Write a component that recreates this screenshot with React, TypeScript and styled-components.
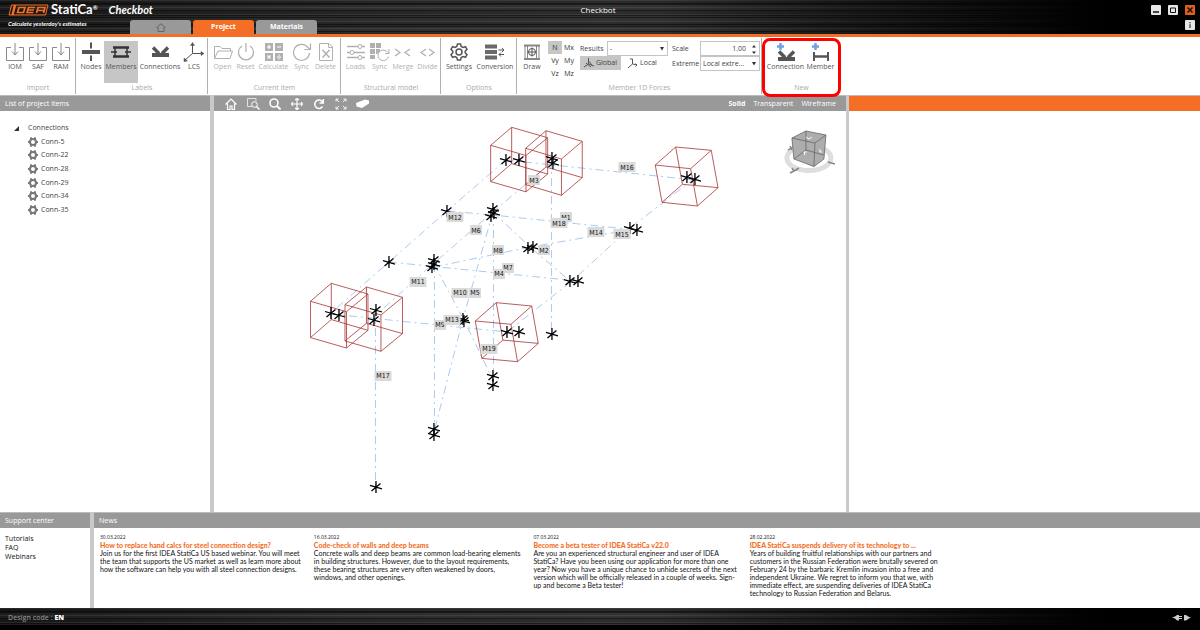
import React from "react";
import styled, { createGlobalStyle, css } from "styled-components";

const Global = createGlobalStyle`
  * { box-sizing: border-box; }
  html, body { margin: 0; padding: 0; }
  body { background: #fff; font-family: "Open Sans", "Noto Sans", sans-serif; font-size: 7px; line-height: 10px; color: #444; }
  button, input, select { font: inherit; color: inherit; margin: 0; padding: 0; border: 0; background: none; }
  button { cursor: pointer; }
  a { color: inherit; text-decoration: none; }
  svg { display: block; flex: none; }
  h1, h2, h3, p, ul { margin: 0; padding: 0; font-size: inherit; font-weight: inherit; }
`;

const ORANGE = "#f46f25";
const BAR = "#999";

const brushed = css`
  background:
    linear-gradient(90deg, rgba(0,0,0,0) 55%, #000 92%),
    repeating-linear-gradient(180deg, rgba(255,255,255,0.08) 0 1px, transparent 1px 3px, rgba(0,0,0,0.5) 3px 4px, transparent 4px 7px),
    repeating-linear-gradient(180deg, transparent 0 4px, rgba(0,0,0,0.35) 4px 5px, rgba(255,255,255,0.03) 5px 11px),
    linear-gradient(90deg, #161616, #262626 30%, #2c2c2c 50%, #202020);
`;

const Page = styled.div`
  display: flex;
  flex-direction: column;
  min-height: 100vh;
`;

const Header = styled.header`
  ${brushed}
  display: grid;
  grid-template-columns: 1fr auto 1fr;
  height: 37px;
  border-bottom: 3px solid ${ORANGE};
  background-clip: padding-box;
  color: #fff;
`;

const BrandStack = styled.div`
  display: grid;
  grid-template-columns: 130px auto;
  grid-template-rows: 20px 14px;
`;

const BrandLogo = styled.div`
  grid-column: 1 / 3;
  display: flex;
  align-items: center;
  gap: 2px;
  height: 19px;
  padding-left: 8px;
  font-family: Lato, sans-serif;
  font-size: 13px;
  line-height: 13px;
  font-weight: 700;
  white-space: nowrap;
`;

const Reg = styled.sup`
  font-size: 6px;
  line-height: 6px;
  vertical-align: 4px;
`;

const AppName = styled.span`
  padding-left: 9px;
  font-size: 11px;
  font-style: italic;
`;

const Tagline = styled.p`
  padding-left: 8px;
  font-family: Lato, sans-serif;
  font-size: 6px;
  line-height: 8px;
  font-style: italic;
  font-weight: 700;
  white-space: nowrap;
`;

const TabRow = styled.nav`
  display: flex;
  gap: 2px;
`;

const Tab = styled.button<{ $active?: boolean }>`
  display: flex;
  align-items: center;
  justify-content: center;
  width: 61px;
  height: 14px;
  border-radius: 3px 3px 0 0;
  background: ${(p) => (p.$active ? ORANGE : BAR)};
  color: #fff;
  font-weight: 700;
`;

const Title = styled.h1`
  padding: 5px 4px 0 0;
  font-size: 8px;
  line-height: 10px;
`;

const WindowControls = styled.div`
  display: grid;
  grid-template-columns: repeat(3, 10px);
  grid-template-rows: 10px 10px;
  gap: 5px 7px;
  justify-content: end;
  padding: 5px 5px 0 0;
`;

const WinButton = styled.button<{ $close?: boolean; $last?: boolean }>`
  display: grid;
  place-items: center;
  border-radius: 1px;
  background: ${(p) => (p.$close ? "#e0601c" : "#e6e6e6")};
  color: #111;
  ${(p) => p.$last && "grid-column: 3;"}
`;

const Ribbon = styled.section`
  display: flex;
  height: 58px;
  background: #fff;
`;

const Group = styled.section<{ $w: number }>`
  display: flex;
  flex-direction: column;
  justify-content: space-between;
  width: ${(p) => p.$w}px;
  height: 58px;
  padding: 4px 0 2px;
  position: relative;
  &::after {
    content: "";
    position: absolute;
    right: 0;
    top: 1px;
    bottom: 1px;
    width: 1px;
    background: #b0b0b0;
  }
`;

const NewGroup = styled(Group)`
  height: 59px;
  margin-top: 1px;
  padding: 0 0 1px;
  border: 3px solid #f00;
  border-radius: 8px;
  z-index: 1;
  &::after { display: none; }
`;

const Tools = styled.div`
  display: flex;
  justify-content: center;
`;

const GroupLabel = styled.h2`
  color: #aaa;
  text-align: center;
`;

const Tool = styled.button<{ $w: number; $on?: boolean; $dim?: boolean }>`
  display: flex;
  flex-direction: column;
  align-items: center;
  width: ${(p) => p.$w}px;
  height: ${(p) => (p.$on ? 42 : 32)}px;
  background: ${(p) => (p.$on ? "#c6c6c6" : "none")};
  color: ${(p) => (p.$dim ? "#b0b0b0" : "#555")};
  white-space: nowrap;
  svg { height: 21px; }
`;

const Forces = styled.div`
  display: grid;
  grid-template-columns: 24px 28px 88px 1fr;
  column-gap: 4px;
  padding: 0 2px 0 3px;
`;

const ForceGrid = styled.div`
  display: grid;
  grid-template-columns: 14px 14px;
  grid-auto-rows: 13px;
`;

const ForceButton = styled.button<{ $on?: boolean }>`
  background: ${(p) => (p.$on ? "#c6c6c6" : "none")};
  color: #333;
`;

const Fields = styled.div`
  display: flex;
  flex-direction: column;
`;

const Field = styled.label<{ $label: number }>`
  display: grid;
  grid-template-columns: ${(p) => p.$label}px 1fr;
  align-items: center;
  height: 15px;
`;

const Box = styled.span`
  position: relative;
  display: block;
  height: 15px;
  border: 1px solid #c4c4c4;
  svg { position: absolute; right: 2px; top: 3px; pointer-events: none; }
`;

const Select = styled.select`
  appearance: none;
  display: block;
  width: 100%;
  height: 13px;
  padding-left: 2px;
`;

const NumberBox = styled.input`
  display: block;
  width: 100%;
  height: 13px;
  padding-right: 13px;
  text-align: right;
`;

const Axes = styled.div`
  display: flex;
  gap: 3px;
`;

const AxisButton = styled.button<{ $on?: boolean }>`
  display: flex;
  align-items: center;
  gap: 2px;
  height: 14px;
  padding: 0 4px;
  background: ${(p) => (p.$on ? "#c6c6c6" : "none")};
`;

const Workspace = styled.main`
  flex: 1;
  display: grid;
  grid-template-columns: 210px 4px minmax(0, 9fr) 3px minmax(0, 5fr);
`;

const Panel = styled.section`
  display: flex;
  flex-direction: column;
  min-width: 0;
`;

const Splitter = styled.div`
  background: #c9c9c9;
`;

const PanelBar = styled.div<{ $accent?: boolean }>`
  display: flex;
  align-items: center;
  justify-content: space-between;
  height: 16px;
  padding: 1px 5px 0;
  border-top: 1px solid #bbb;
  background: ${(p) => (p.$accent ? ORANGE : BAR)};
  color: #fff;
`;

const TreePane = styled.nav`
  padding: 10px 0 0 28px;
`;

const TreeRoot = styled.p`
  position: relative;
  line-height: 14px;
  svg { position: absolute; left: -14px; top: 5px; }
`;

const Tree = styled.ul`
  display: grid;
  grid-auto-rows: 1fr;
  height: 82px;
  list-style: none;
`;

const TreeLink = styled.a`
  display: flex;
  align-items: center;
  gap: 3px;
  height: 100%;
`;

const ViewTools = styled.div`
  display: flex;
  gap: 8px;
  padding-left: 5px;
`;

const ViewButton = styled.button`
  display: grid;
  place-items: center;
  width: 14px;
  height: 14px;
`;

const Modes = styled.div`
  display: flex;
  gap: 8px;
  padding-right: 5px;
`;

const Mode = styled.button<{ $on?: boolean }>`
  font-weight: ${(p) => (p.$on ? 700 : 400)};
`;

const Scene = styled.svg`
  width: 100%;
  height: 100%;
  flex: 1;
  text { font: 7px "DejaVu Sans Condensed", "DejaVu Sans", sans-serif; fill: #111; text-anchor: middle; }
`;

const Bottom = styled.section`
  display: grid;
  grid-template-columns: 90px 4px minmax(0, 1fr);
  min-height: 96px;
`;

const Links = styled.div`
  display: flex;
  flex-direction: column;
  padding: 6px 5px;
  line-height: 9px;
  color: #111;
`;

const NewsList = styled.div`
  display: grid;
  grid-template-columns: repeat(4, max-content);
  column-gap: 13px;
  padding: 5px 6px;
  font-family: Lato, sans-serif;
  line-height: 8px;
  color: #111;
`;

const NewsDate = styled.p`
  font-family: "Open Sans", sans-serif;
  font-size: 5px;
`;

const NewsTitle = styled.h3`
  color: ${ORANGE};
  font-weight: 900;
`;

const Line = styled.p`
  white-space: nowrap;
`;

const Footer = styled.footer`
  ${brushed}
  display: flex;
  align-items: flex-start;
  justify-content: space-between;
  height: 22px;
  padding: 5px 8px 0;
  border-bottom: 5px solid #000;
  color: #888;
  font-weight: 600;
  b { color: #fff; }
`;

const Ico = ({ children, w = 22, sw = 1 }: { children: React.ReactNode; w?: number; sw?: number }) => (
  <svg width={w} height="21" viewBox={`0 0 ${w} 21`} fill="none" stroke="currentColor" strokeWidth={sw}>
    {children}
  </svg>
);

const ImportIcon = () => (
  <Ico><path d="M7 6.500H2.500V19.500H19.500V6.500H15M11 2V13.500M8 10.500L11 14L14 10.500" stroke="#888" /></Ico>
);
const NodesIcon = () => (
  <Ico><path d="M2 11H20" strokeWidth="4" /><path d="M11 1.500V7.500M11 14.500V20" strokeWidth="2" /></Ico>
);
const MembersIcon = () => (
  <Ico><path d="M3 6.500H19M3 15.500H19" strokeWidth="2.500" stroke="#333" /><path d="M5 7V15M17 7V15M1 11H7M15 11H21" strokeWidth="1.500" stroke="#333" /></Ico>
);
const ConnIcon = () => (
  <><path d="M3 14H20" strokeWidth="4" /><path d="M4 6.500L10 12.500M19 6.500L13 12.500" strokeWidth="3.500" /></>
);
const LcsIcon = () => (
  <Ico><path d="M9.500 2V12.500H20M9.500 12.500L2 19" /><path d="M7.500 4.500L9.500 1.500L11.500 4.500ZM18 10.500L21 12.500L18 14.500ZM1 17L1 20.500L4.500 20Z" fill="currentColor" strokeWidth=".5" /></Ico>
);
const OpenIcon = () => (
  <Ico><path d="M2.500 17.500V5.500H8L10 7.500H18.500V10M2.500 17.500L6 10H20.500L18 17.500Z" /></Ico>
);
const PowerIcon = () => (
  <Ico sw={1.2}><path d="M7 5A7.500 7.500 0 1 0 15 5M11 2V11" /></Ico>
);
const CalcIcon = () => (
  <Ico>
    <path d="M2 2H10V10H2ZM12 2H20V10H12ZM2 12H10V20H2ZM12 12H20V20H12Z" fill="currentColor" stroke="none" />
    <path d="M4 6H8M6 4V8M14 6H18M4.500 14.500L7.500 17.500M7.500 14.500L4.500 17.500M14 16H18M16 13.500V14.800M16 17.200V18.500" stroke="#fff" strokeWidth="1.200" />
  </Ico>
);
const SyncIcon = () => (
  <Ico sw={1.2}><path d="M18.500 12A8 8 0 1 1 16 5.500L19 8.500M19.500 2.500V8.500H13.500" /></Ico>
);
const DeleteIcon = () => (
  <Ico><path d="M4.500 2.500H14L17.500 6V19.500H4.500ZM13.500 2.500V6.500H17.500" /><path d="M7.500 9L14.500 16.500M14.500 9L7.500 16.500" strokeWidth="1.500" /></Ico>
);
const LoadsIcon = () => (
  <Ico><path d="M2 5.500H13M17 5.500H20M2 11.500H5M9 11.500H20M2 16.500H13M17 16.500H20" strokeWidth="1.500" /><circle cx="15" cy="5.500" r="2" /><circle cx="7" cy="11.500" r="2" /><circle cx="15" cy="16.500" r="2" /></Ico>
);
const ModelSyncIcon = () => (
  <Ico>
    <path d="M1 2H6V7H1ZM7 2H12V7H7ZM1 8H6V13H1ZM7 8H11V10L8 13H7ZM1 14H6V18H1Z" fill="currentColor" stroke="none" />
    <path d="M19.500 15.500A5.300 5.300 0 1 1 18 10.500L19.500 12M20 8V12.500H16" />
  </Ico>
);
const MergeIcon = () => (
  <Ico sw={1.3}><path d="M3 8L8 11.500L3 15M18 8L13 11.500L18 15" /></Ico>
);
const DivideIcon = () => (
  <Ico sw={1.3}><path d="M9 8L4 11.500L9 15M12 8L17 11.500L12 15" /></Ico>
);
const gearPath = "M9.500 2H12.500L13.200 4.500L15 5.500L17.500 4.700L19 7.300L17.200 9.200V10.800L19 12.700L17.500 15.300L15 14.500L13.200 15.500L12.500 18H9.500L8.800 15.500L7 14.500L4.500 15.300L3 12.700L4.800 10.800V9.200L3 7.300L4.500 4.700L7 5.500L8.800 4.500Z";
const SettingsIcon = () => (
  <Ico sw={1.500}><g transform="translate(0 1)"><path d={gearPath} /><circle cx="11" cy="10" r="3" /></g></Ico>
);
const ConversionIcon = () => (
  <Ico><path d="M1 5.500H13M1 11H13M1 16.500H13" strokeWidth="4" stroke="#6a6a6a" /><path d="M14.500 9H20M18 7L20 9L18 11M20 13.500H15M17 11.500L15 13.500L17 15.500" /></Ico>
);
const DrawIcon = () => (
  <Ico><path d="M3 4.500H19M3 18H19" strokeWidth="2" stroke="#888" /><path d="M4 5V17M6.500 5V17M15.500 5V17M18 5V17" strokeWidth=".7" /><circle cx="11" cy="11" r="3.500" /><path d="M11 6.500V15.500M6.500 11H15.500" /></Ico>
);
const Plus = () => <path d="M5.500 2V9M2 5.500H9" stroke="#6ba3e6" strokeWidth="2.500" />;

const Arrow = () => (
  <svg width="6" height="7" viewBox="0 0 6 7"><path d="M1 2H5L3 5.500Z" fill="#333" /></svg>
);

const importTools = ["IOM", "SAF", "RAM"];

const treeItems = ["Conn-5", "Conn-22", "Conn-28", "Conn-29", "Conn-34", "Conn-35"];

const news = [
  { date: "30.03.2022", title: "How to replace hand calcs for steel connection design?", lines: ["Join us for the first IDEA StatiCa US based webinar. You will meet", "the team that supports the US market as well as learn more about", "how the software can help you with all steel connection designs."] },
  { date: "16.03.2022", title: "Code-check of walls and deep beams", lines: ["Concrete walls and deep beams are common load-bearing elements", "in building structures. However, due to the layout requirements,", "these bearing structures are very often weakened by doors,", "windows, and other openings."] },
  { date: "07.03.2022", title: "Become a beta tester of IDEA StatiCa v22.0", lines: ["Are you an experienced structural engineer and user of IDEA", "StatiCa? Have you been using our application for more than one", "year? Now you have a unique chance to unhide secrets of the next", "version which will be officially released in a couple of weeks. Sign-", "up and become a Beta tester!"] },
  { date: "28.02.2022", title: "IDEA StatiCa suspends delivery of its technology to ...", lines: ["Years of building fruitful relationships with our partners and", "customers in the Russian Federation were brutally severed on", "February 24 by the barbaric Kremlin invasion into a free and", "independent Ukraine. We regret to inform you that we, with", "immediate effect, are suspending deliveries of IDEA StatiCa", "technology to Russian Federation and Belarus."] },
];

type Pt = [number, number];

// Each cube: the four top corners (back, right, left, front), then the shift to the bottom face.
const cubes: { top: Pt[]; shift: Pt }[] = [
  { top: [[511.7, 127.3], [547.7, 137.7], [490.7, 145.3], [526, 155.500]], shift: [0, 36.3] },
  { top: [[546, 130.7], [582.3, 141.3], [525.7, 148.3], [561.5, 159]], shift: [0, 36.3] },
  { top: [[675.7, 147], [711.3, 150.3], [655.3, 165], [690.7, 168.7]], shift: [6.8, 37.3] },
  { top: [[331.3, 283.3], [368, 294], [310.5, 301.3], [346.5, 311.7]], shift: [0, 36.3] },
  { top: [[366.5, 287], [402.5, 297.3], [345, 304.7], [381, 315]], shift: [0, 36.3] },
  { top: [[496.3, 302.7], [531.7, 306], [475.3, 321], [511, 324.3]], shift: [6.6, 37.4] },
];

const cubePath = ({ top, shift }: { top: Pt[]; shift: Pt }) => {
  const low = top.map(([x, y]) => [x + shift[0], y + shift[1]] as Pt);
  const face = (f: Pt[]) => `M${f[0]}L${f[1]}L${f[3]}L${f[2]}Z`;
  return face(top) + face(low) + top.map((p, i) => `M${p}L${low[i]}`).join("");
};

const members = [
  "M506 160L695 180", "M695 178L630 228L572 281L507 332", "M506 160L447 211L389 262L331 313",
  "M553 161L493 212L433 264L376 315", "M447 211L493 215L637 230", "M389 262L578 281", "M331 314L507 332",
  "M551.5 160V334", "M493.5 212V376", "M434.5 264V430", "M375.500 310V487",
  "M493 212L463 319L434 432", "M434 264L464 320L493 380", "M493 212L530 247L570 281", "M434 267L530 247L635 229",
];

const nodes: Pt[] = [
  [506, 160], [519, 160], [552, 158], [553, 163], [687, 177], [695, 179], [447, 211], [493, 209], [491, 216], [494, 213],
  [528, 248], [533, 247], [630, 228], [637, 230], [389, 262], [434, 260], [432, 267], [434, 264], [570, 281], [578, 281],
  [331, 313], [339, 315], [376, 310], [374, 320], [463, 319], [464, 321], [507, 332], [519, 332], [552, 334],
  [493, 376], [493, 385], [434, 429], [434, 435], [376, 487],
];

const labels: [string, number, number][] = [
  ["M3", 534, 180], ["M16", 627, 167], ["M1", 566, 217], ["M18", 559, 223], ["M12", 455, 217], ["M6", 476, 230],
  ["M14", 596, 232], ["M15", 622, 234], ["M2", 544, 250], ["M8", 498, 250], ["M7", 508, 268], ["M4", 499, 274],
  ["M11", 418, 282], ["M10", 460, 293], ["M5", 475, 293], ["M9", 440, 325], ["M13", 452, 320], ["M19", 489, 349], ["M17", 383, 376],
];

const ModelView = () => (
  <Scene viewBox="214 111 632 401" role="img" aria-label="Structural model">
    <g fill="none" stroke="#a0c4ee" strokeWidth="0.9" strokeDasharray="8 4 2 4">
      {members.map((d) => <path key={d} d={d} />)}
    </g>
    <g fill="none" stroke="#a83434" strokeWidth="0.8">
      {cubes.map((c, i) => <path key={i} d={cubePath(c)} />)}
    </g>
    <g stroke="#000" strokeWidth="1.3">
      {nodes.map(([x, y], i) => (
        <path key={i} transform={`translate(${x} ${y})`} d="M0 -6V6M-6 -1.500L6 2M-4.500 4L4.500 -3.500" />
      ))}
    </g>
    {labels.map(([t, x, y]) => (
      <g key={t}>
        <rect x={x - (t.length > 2 ? 8.5 : 6)} y={y - 5} width={t.length > 2 ? 17 : 12} height="10" fill="#dadada" />
        <text x={x} y={y + 2.5}>{t}</text>
      </g>
    ))}
    <g>
      <ellipse cx="809" cy="158" rx="22" ry="12.500" fill="none" stroke="#dedede" strokeWidth="5" />
      <path d="M792 138L806 131L826 135L824 159L814 166.500L794 159Z" fill="#adadad" stroke="#666" strokeWidth=".8" />
      <path d="M792 138L815 143L826 135M815 143L814 166.500M806 131L806 150L794 159M806 150L824 155" fill="none" stroke="#666" strokeWidth=".8" />
      <path d="M806 137L809 139L812 137M804 152L805 155M804 152L807 152M820 149V152H822" fill="none" stroke="#fff" />
      <path d="M790 173L798 169M792 168L794 171L799 168M788 150L793 147M790 146L792 150M828 162L835 164" fill="none" stroke="#888" strokeWidth="1.500" />
    </g>
  </Scene>
);

const App = () => (
  <Page>
    <Global />
    <Header>
      <BrandStack>
        <BrandLogo>
          <svg width="41" height="12" viewBox="0 0 41 12" fill="none" stroke={ORANGE}>
            <path d="M3.500 1H40L37.500 11H1Z" strokeWidth="1" />
            <path d="M7 1L4.500 11" strokeWidth="2.500" />
            <path d="M11 3.500H17L15.500 8.500H9.500ZM27 3.500H20.500L19 8.500H25.500M20 6H26M28.500 9L30 3.500H37L35.500 9M29.500 6.500H36" strokeWidth="1.700" />
          </svg>
          <span>StatiCa<Reg>®</Reg></span>
          <AppName>Checkbot</AppName>
        </BrandLogo>
        <Tagline>Calculate yesterday's estimates</Tagline>
        <TabRow>
          <Tab aria-label="Home">
            <svg width="10" height="9" viewBox="0 0 10 9" fill="none" stroke="#666"><path d="M.5 4.500L5 .8L9.500 4.500M2 4V8.500H8V4" /></svg>
          </Tab>
          <Tab $active>Project</Tab>
          <Tab>Materials</Tab>
        </TabRow>
      </BrandStack>
      <Title>Checkbot</Title>
      <WindowControls>
        <WinButton aria-label="Minimize"><svg width="6" height="6"><path d="M0 5H6" stroke="#111" strokeWidth="1.500" /></svg></WinButton>
        <WinButton aria-label="Maximize"><svg width="6" height="6"><path d="M.5 1H5.500V5.500H.5Z" fill="none" stroke="#111" /></svg></WinButton>
        <WinButton aria-label="Close" $close><svg width="6" height="6"><path d="M.5 .5L5.500 5.500M5.500 .5L.5 5.500" stroke="#111" strokeWidth="1.500" /></svg></WinButton>
        <WinButton aria-label="Information" $last><svg width="2" height="6"><path d="M1 0V1.300M1 2.200V6" stroke="#111" /></svg></WinButton>
      </WindowControls>
    </Header>

    <Ribbon>
      <Group $w={76}>
        <Tools>{importTools.map((t) => <Tool key={t} $w={23}><ImportIcon />{t}</Tool>)}</Tools>
        <GroupLabel>Import</GroupLabel>
      </Group>
      <Group $w={132}>
        <Tools>
          <Tool $w={26}><NodesIcon />Nodes</Tool>
          <Tool $w={34} $on><MembersIcon />Members</Tool>
          <Tool $w={44}><Ico><ConnIcon /></Ico>Connections</Tool>
          <Tool $w={24}><LcsIcon />LCS</Tool>
        </Tools>
        <GroupLabel>Labels</GroupLabel>
      </Group>
      <Group $w={133}>
        <Tools>
          <Tool $w={24} $dim><OpenIcon />Open</Tool>
          <Tool $w={22} $dim><PowerIcon />Reset</Tool>
          <Tool $w={34} $dim><CalcIcon />Calculate</Tool>
          <Tool $w={22} $dim><SyncIcon />Sync</Tool>
          <Tool $w={26} $dim><DeleteIcon />Delete</Tool>
        </Tools>
        <GroupLabel>Current item</GroupLabel>
      </Group>
      <Group $w={100}>
        <Tools>
          <Tool $w={26} $dim><LoadsIcon />Loads</Tool>
          <Tool $w={22} $dim><ModelSyncIcon />Sync</Tool>
          <Tool $w={25} $dim><MergeIcon />Merge</Tool>
          <Tool $w={24} $dim><DivideIcon />Divide</Tool>
        </Tools>
        <GroupLabel>Structural model</GroupLabel>
      </Group>
      <Group $w={76}>
        <Tools>
          <Tool $w={32}><SettingsIcon />Settings</Tool>
          <Tool $w={40}><ConversionIcon />Conversion</Tool>
        </Tools>
        <GroupLabel>Options</GroupLabel>
      </Group>
      <Group $w={245}>
        <Forces>
          <Tool $w={24}><DrawIcon />Draw</Tool>
          <ForceGrid>
            {["N", "Mx", "Vy", "My", "Vz", "Mz"].map((f) => <ForceButton key={f} $on={f === "N"}>{f}</ForceButton>)}
          </ForceGrid>
          <Fields>
            <Field $label={27}>Results<Box><Select defaultValue="-"><option>-</option></Select><Arrow /></Box></Field>
            <Axes>
              <AxisButton $on><svg width="10" height="10" fill="none" stroke="#555"><path d="M4.500 0V6L10 8M4.500 6L0 9M2 5L7 9M4.500 3L8 7" /></svg>Global</AxisButton>
              <AxisButton><svg width="10" height="10" fill="none" stroke="#555"><path d="M2 1H4.500V6L9 7M4.500 6L0 10M7.500 5.500L9 7L7.500 8.500" /></svg>Local</AxisButton>
            </Axes>
          </Fields>
          <Fields>
            <Field $label={28}>Scale<Box><NumberBox defaultValue="1.00" /><svg width="6" height="9"><path d="M1 2.500L3 0L5 2.500ZM1 6.500H5L3 9Z" fill="#333" /></svg></Box></Field>
            <Field $label={28}>Extreme<Box><Select defaultValue="Local extre..."><option>Local extre...</option></Select><Arrow /></Box></Field>
          </Fields>
        </Forces>
        <GroupLabel>Member 1D Forces</GroupLabel>
      </Group>
      <NewGroup $w={79}>
        <Tools>
          <Tool $w={38}><Ico><Plus /><g transform="translate(0 4)"><ConnIcon /></g></Ico>Connection</Tool>
          <Tool $w={32}><Ico><Plus /><path d="M4 11V20M18 11V20" strokeWidth="2" /><path d="M4 15.500H18" strokeWidth="2.500" /></Ico>Member</Tool>
        </Tools>
        <GroupLabel>New</GroupLabel>
      </NewGroup>
    </Ribbon>

    <Workspace>
      <Panel>
        <PanelBar>List of project items</PanelBar>
        <TreePane>
          <TreeRoot><svg width="5" height="5"><path d="M5 0V5H0Z" fill="#333" /></svg>Connections</TreeRoot>
          <Tree>
            {treeItems.map((t) => (
              <li key={t}>
                <TreeLink href="#">
                  <svg width="10" height="10" viewBox="0 0 10 10" fill="none" stroke="#777">
                    <circle cx="5" cy="5" r="3" strokeWidth="2" />
                    <path d="M3 .2V2M7 .2V2M3 8V9.800M7 8V9.800M0 5H1.500M8.500 5H10" strokeWidth="1.800" />
                  </svg>
                  {t}
                </TreeLink>
              </li>
            ))}
          </Tree>
        </TreePane>
      </Panel>
      <Splitter />
      <Panel>
        <PanelBar>
          <ViewTools>
            <ViewButton aria-label="Home view"><svg width="12" height="12" fill="none" stroke="#fff" strokeWidth="1.200"><path d="M.5 6.500L6 1L11.500 6.500M2.500 5.500V11.500H5V8H7V11.500H9.500V5.500" /></svg></ViewButton>
            <ViewButton aria-label="Zoom window"><svg width="13" height="12" fill="none" stroke="#fff"><path d="M5 8.500H.5V.5H9V3" strokeWidth=".7" /><circle cx="7.500" cy="6.500" r="2.800" /><path d="M9.500 8.500L12.500 11.500" strokeWidth="1.500" /></svg></ViewButton>
            <ViewButton aria-label="Zoom"><svg width="12" height="12" fill="none" stroke="#fff" strokeWidth="1.600"><circle cx="5" cy="5" r="4" /><path d="M8 8L11.500 11.500" strokeWidth="2" /></svg></ViewButton>
            <ViewButton aria-label="Pan"><svg width="12" height="12" fill="none" stroke="#fff" strokeWidth="1.200"><path d="M6 0V12M0 6H12M4 2L6 .5L8 2M4 10L6 11.500L8 10M2 4L.5 6L2 8M10 4L11.500 6L10 8" /></svg></ViewButton>
            <ViewButton aria-label="Rotate"><svg width="12" height="12" fill="none" stroke="#fff" strokeWidth="1.500"><path d="M9.500 8.500A4.200 4.200 0 1 1 9.500 4M10.300 1V5H6.500" /></svg></ViewButton>
            <ViewButton aria-label="Fit to view"><svg width="12" height="12" fill="none" stroke="#fff" strokeWidth=".9"><path d="M1 3.500V1H3.500M1 1L4 4M8.500 1H11V3.500M11 1L8 4M1 8.500V11H3.500M1 11L4 8M11 8.500V11H8.500M11 11L8 8" /></svg></ViewButton>
            <ViewButton aria-label="Solid beam"><svg width="14" height="10"><path d="M0 4L9 .5L13 1.500V4.500L6 9L.5 7.500Z" fill="#fff" /></svg></ViewButton>
          </ViewTools>
          <Modes>
            <Mode $on>Solid</Mode>
            <Mode>Transparent</Mode>
            <Mode>Wireframe</Mode>
          </Modes>
        </PanelBar>
        <ModelView />
      </Panel>
      <Splitter />
      <Panel><PanelBar $accent /></Panel>
    </Workspace>

    <Bottom>
      <Panel>
        <PanelBar>Support center</PanelBar>
        <Links><a href="#">Tutorials</a><a href="#">FAQ</a><a href="#">Webinars</a></Links>
      </Panel>
      <Splitter />
      <Panel>
        <PanelBar>News</PanelBar>
        <NewsList>
          {news.map((n) => (
            <article key={n.date}>
              <NewsDate>{n.date}</NewsDate>
              <NewsTitle><a href="#">{n.title}</a></NewsTitle>
              {n.lines.map((l) => <Line key={l}>{l}</Line>)}
            </article>
          ))}
        </NewsList>
      </Panel>
    </Bottom>

    <Footer>
      <span>Design code : <b>EN</b></span>
      <svg width="20" height="9" fill="#ccc"><path d="M0 4.500L3 3.500L5 2H7V3H10V4H7V5H10V6H7V7.500H5L3 5.500ZM12 2H14L17 4L19 4.500L17 5.500L14 7.500H12Z" /></svg>
    </Footer>
  </Page>
);

export default App;
